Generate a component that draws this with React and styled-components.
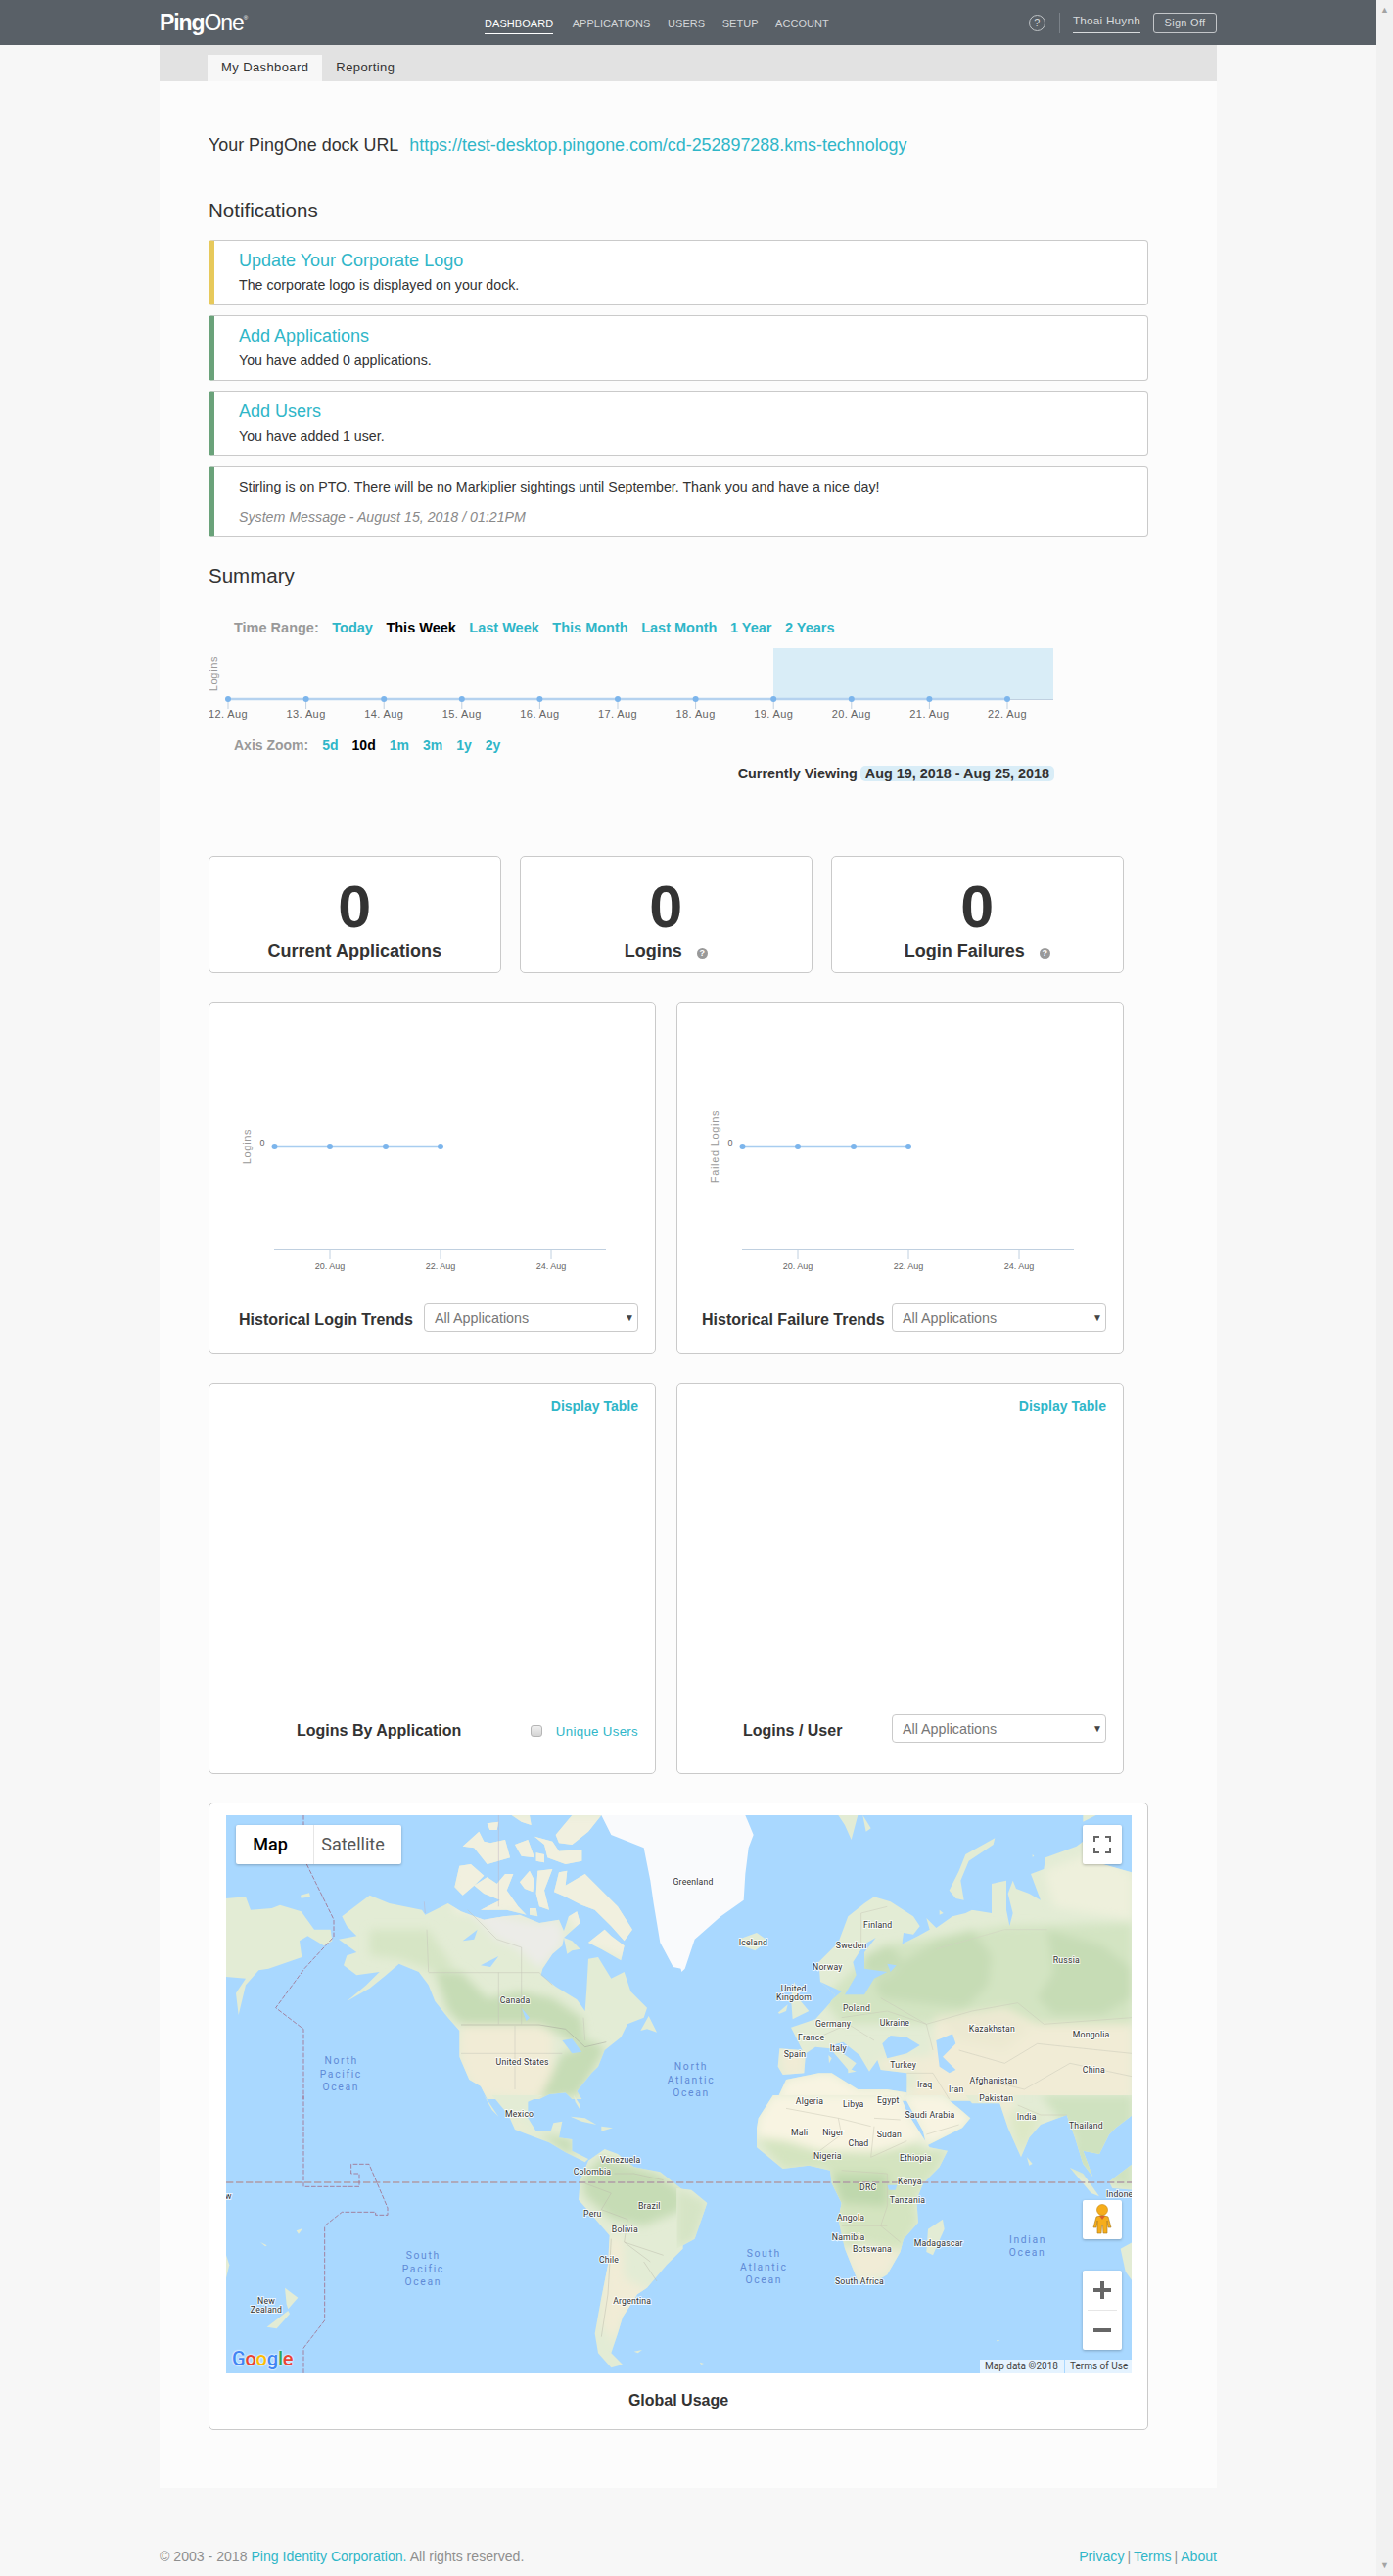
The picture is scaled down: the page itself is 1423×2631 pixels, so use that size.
import React from 'react';
import styled, { createGlobalStyle } from 'styled-components';

const TEAL = '#2fb6c8';
const BORDER = '#cacaca';

const GlobalStyle = createGlobalStyle`
  html, body { margin: 0; padding: 0; background: #f7f7f7; }
  body { font-family: "Liberation Sans", Arial, sans-serif; color: #333; }
  * { box-sizing: border-box; }
`;

const Page = styled.div`
  display: flex;
  width: 1423px;
  height: 2631px;
  overflow: hidden;
`;
const Main = styled.div`
  width: 1406px;
  display: flex;
  flex-direction: column;
`;
const ScrollTrack = styled.div`
  width: 17px;
  background: #f1f1f1;
  display: flex;
  flex-direction: column;
  justify-content: space-between;
  align-items: center;
  padding: 6px 0;
  color: #a3a3a3;
  font-size: 9px;
  line-height: 9px;
`;
const Header = styled.header`
  height: 46px;
  background: #596067;
  display: flex;
  justify-content: center;
`;
const HeaderInner = styled.div`
  width: 1080px;
  display: flex;
  align-items: center;
`;
const Logo = styled.div`
  width: 76px;
  color: #fff;
  font-size: 23px;
  letter-spacing: -1.1px;
  line-height: 26px;
  margin-top: -1px;
  white-space: nowrap;
  b { font-weight: 700; }
  span { font-weight: 400; }
  sup { font-size: 6px; vertical-align: 11px; line-height: 0; letter-spacing: 0; }
`;
const Nav = styled.nav`
  display: flex;
  gap: 17.5px;
  margin-left: 256px;
`;
const NavItem = styled.a`
  font-size: 11px;
  letter-spacing: 0.05px;
  color: ${(p) => (p.$active ? '#fff' : '#d3d6d9')};
  height: 22px;
  line-height: 23px;
  margin-top: 1px;
  margin-right: ${(p) => (p.$active ? 2 : 0)}px;
  border-bottom: 1px solid ${(p) => (p.$active ? '#fff' : 'transparent')};
  white-space: nowrap;
`;
const UserArea = styled.div`
  margin-left: auto;
  display: flex;
  align-items: center;
`;
const HelpRing = styled.span`
  width: 17px;
  height: 17px;
  border: 1px solid #bfc3c6;
  border-radius: 50%;
  color: #d3d6d9;
  font-size: 11px;
  line-height: 15px;
  text-align: center;
`;
const Divider = styled.span`
  width: 1px;
  height: 21px;
  background: #7b8289;
  margin: 0 13px 0 14px;
`;
const UserName = styled.a`
  font-size: 11.8px;
  letter-spacing: 0.2px;
  color: #d8dbdd;
  height: 21px;
  line-height: 17px;
  padding: 0;
  border-bottom: 1px solid #d8dbdd;
  margin-right: 13px;
  white-space: nowrap;
`;
const SignOff = styled.button`
  width: 65px;
  height: 21px;
  border: 1px solid #c3c6c9;
  border-radius: 3px;
  background: transparent;
  color: #d8dbdd;
  font: 11px "Liberation Sans", Arial, sans-serif;
  letter-spacing: 0.3px;
  padding: 0;
`;
const Column = styled.div`
  width: 1080px;
  margin: 0 auto;
`;
const TabBar = styled.div`
  height: 37px;
  background: #e2e2e2;
  padding: 10px 0 0 49px;
  display: flex;
`;
const Tab = styled.a`
  height: 27px;
  padding: 0 14px;
  line-height: 26px;
  font-size: 13px;
  letter-spacing: 0.4px;
  color: #333;
  background: ${(p) => (p.$active ? '#f7f7f7' : 'transparent')};
`;
const Body = styled.main`
  background: #fcfcfc;
  height: 2458px;
  padding: 55px 0 0 50px;
`;
const UrlRow = styled.div`
  font-size: 17.9px;
  line-height: 20px;
  display: flex;
  gap: 11px;
`;
const TealLink = styled.a`
  color: ${TEAL};
`;
const SectionTitle = styled.h2`
  margin: ${(p) => p.$top}px 0 0;
  font-size: 20.5px;
  font-weight: 400;
  line-height: 24px;
`;
const NoticeList = styled.div`
  width: 960px;
  margin-top: 18px;
  display: flex;
  flex-direction: column;
  gap: 10px;
`;
const Notice = styled.div`
  height: ${(p) => p.$height}px;
  background: #fff;
  border: 1px solid ${BORDER};
  border-left: 6px solid ${(p) => p.$accent};
  border-radius: 4px;
  padding: 10px 0 0 25px;
`;
const NoticeTitle = styled.a`
  display: block;
  color: ${TEAL};
  font-size: 18px;
  line-height: 20px;
`;
const NoticeText = styled.p`
  margin: ${(p) => p.$top}px 0 0;
  font-size: 14.2px;
  line-height: 16px;
  color: ${(p) => (p.$muted ? '#8a8a8a' : '#333')};
  font-style: ${(p) => (p.$muted ? 'italic' : 'normal')};
`;
const RangeRow = styled.div`
  display: flex;
  margin: ${(p) => p.$top}px 0 0 26px;
  font-size: ${(p) => p.$size}px;
  line-height: 16px;
  font-weight: 700;
  color: #999;
  gap: ${(p) => p.$gap}px;
`;
const RangeLink = styled.a`
  color: ${(p) => (p.$active ? '#000' : TEAL)};
`;
const NavChartSvg = styled.svg`
  display: block;
  margin-top: 2px;
  overflow: visible;
`;
const ViewingRow = styled.div`
  width: 864px;
  margin-top: 13px;
  display: flex;
  justify-content: flex-end;
  align-items: center;
  gap: 3px;
  font-size: 14.4px;
  font-weight: 700;
  line-height: 16px;
  white-space: nowrap;
`;
const ViewingPill = styled.span`
  background: #d9edf7;
  border-radius: 5px;
  padding: 0 5px;
  height: 16px;
`;
const StatRow = styled.div`
  display: grid;
  width: 935px;
  grid-template-columns: repeat(3, 298.5px);
  gap: 19.5px;
  margin-top: 76px;
`;
const Card = styled.section`
  background: #fff;
  border: 1px solid ${BORDER};
  border-radius: 5px;
`;
const StatCard = styled(Card)`
  height: 120px;
  text-align: center;
  padding-top: 20px;
`;
const StatNumber = styled.div`
  font-size: 61px;
  line-height: 62px;
  font-weight: 700;
  color: #333;
`;
const StatLabel = styled.div`
  font-size: 18px;
  line-height: 20px;
  font-weight: 700;
  margin-top: 4px;
`;
const TinyHelp = styled.span`
  display: inline-block;
  width: 11px;
  height: 11px;
  border-radius: 50%;
  background: #999;
  color: #fff;
  font-size: 9px;
  line-height: 11px;
  margin-left: 15px;
  vertical-align: 1px;
`;
const ChartGrid = styled.div`
  display: grid;
  width: 935px;
  grid-template-columns: repeat(2, 457px);
  gap: 21px;
  margin-top: ${(p) => p.$top}px;
`;
const TrendCard = styled(Card)`
  height: ${(p) => p.$height}px;
  display: flex;
  flex-direction: column;
`;
const TableLinkRow = styled.div`
  display: flex;
  justify-content: flex-end;
  padding: 14px 17px 0;
  font-size: 14px;
  line-height: 16px;
  font-weight: 700;
`;
const CardFooter = styled.div`
  margin-top: auto;
  height: 29px;
  margin-bottom: ${(p) => p.$bottom}px;
  padding: 0 17px 0 ${(p) => p.$left}px;
  display: flex;
  align-items: center;
  justify-content: space-between;
`;
const FooterTitle = styled.span`
  font-size: 16px;
  font-weight: 700;
  white-space: nowrap;
  margin-top: 5px;
`;
const SelectBox = styled.div`
  width: 219px;
  height: 29px;
  background: #fff;
  border: 1px solid ${BORDER};
  border-radius: 4px;
  padding: 0 3px 0 10px;
  display: flex;
  align-items: center;
  justify-content: space-between;
  font-size: 14.3px;
  color: #777;
  i { font-style: normal; font-size: 10px; color: #444; }
`;
const UniqueUsers = styled.label`
  display: flex;
  align-items: center;
  gap: 14px;
  font-size: 13.3px;
  letter-spacing: 0.3px;
  color: ${TEAL};
  margin-top: 5px;
`;
const FakeCheck = styled.span`
  width: 12px;
  height: 12px;
  border: 1px solid #b5b5b5;
  border-radius: 3px;
  background: linear-gradient(#f0f0f0, #d4d4d4);
`;
const MapCard = styled(Card)`
  width: 960px;
  height: 641px;
  margin-top: 29px;
  padding: 12px 17px 0;
`;
const MapFrame = styled.div`
  position: relative;
  width: 925px;
  height: 570px;
  background: #a9d8ff;
  overflow: hidden;
  svg { display: block; }
`;
const MapCaption = styled.div`
  text-align: center;
  font-size: 16px;
  font-weight: 700;
  line-height: 20px;
  margin-top: 18px;
`;
const MapButton = styled.div`
  position: absolute;
  background: #fff;
  border-radius: 2px;
  box-shadow: 0 1px 3px rgba(0, 0, 0, 0.25);
  display: flex;
  flex-direction: column;
  align-items: center;
  justify-content: center;
  width: 40px;
  height: ${(p) => p.$height}px;
  right: 10px;
  top: ${(p) => p.$top}px;
`;
const TypeControl = styled.div`
  position: absolute;
  left: 10px;
  top: 10px;
  height: 40px;
  width: 169px;
  background: #fff;
  border-radius: 2px;
  box-shadow: 0 1px 3px rgba(0, 0, 0, 0.25);
  display: flex;
  font-family: Roboto, sans-serif;
  font-size: 18px;
  line-height: 40px;
`;
const TypeOption = styled.div`
  width: ${(p) => p.$width}px;
  padding-right: ${(p) => (p.$active ? 9 : 10)}px;
  text-align: center;
  color: ${(p) => (p.$active ? '#000' : '#565656')};
  font-weight: ${(p) => (p.$active ? 500 : 400)};
  border-right: ${(p) => (p.$active ? '1px solid #e6e6e6' : 'none')};
`;
const ZoomRule = styled.div`
  width: 30px;
  height: 1px;
  background: #e6e6e6;
`;
const Attribution = styled.div`
  position: absolute;
  right: 0;
  bottom: 0;
  height: 14px;
  display: flex;
  gap: 1px;
  font-family: Roboto, sans-serif;
  font-size: 10px;
  line-height: 14px;
  color: #444;
`;
const AttrPiece = styled.span`
  background: rgba(255, 255, 255, 0.7);
  padding: 0 5px;
  width: ${(p) => p.$width}px;
  white-space: nowrap;
`;
const GoogleMark = styled.div`
  position: absolute;
  left: 6px;
  bottom: 3px;
  font-family: Roboto, sans-serif;
  font-size: 20px;
  line-height: 24px;
  letter-spacing: -0.2px;
  font-weight: 500;
  text-shadow: 0 0 2px #fff, 0 0 2px #fff;
`;
const Letter = styled.span`
  color: ${(p) => p.$color};
`;
const FooterBar = styled.footer`
  width: 1080px;
  margin: 62px auto 0;
  display: flex;
  justify-content: space-between;
  font-size: 14.1px;
  line-height: 16px;
  color: #8f8f8f;
`;
const FooterLinks = styled.div`
  display: flex;
  gap: 3px;
`;

const NAV_ITEMS = ['DASHBOARD', 'APPLICATIONS', 'USERS', 'SETUP', 'ACCOUNT'];
const NOTICES = [
  { title: 'Update Your Corporate Logo', text: 'The corporate logo is displayed on your dock.', accent: '#e7c95b' },
  { title: 'Add Applications', text: 'You have added 0 applications.', accent: '#6aa27a' },
  { title: 'Add Users', text: 'You have added 1 user.', accent: '#6aa27a' },
];
const RANGES = ['Today', 'This Week', 'Last Week', 'This Month', 'Last Month', '1 Year', '2 Years'];
const ZOOMS = ['5d', '10d', '1m', '3m', '1y', '2y'];
const NAV_DAYS = [12, 13, 14, 15, 16, 17, 18, 19, 20, 21, 22];

function NavChart() {
  const xAt = (i) => 20 + 79.6 * i;
  return (
    <NavChartSvg width="870" height="92" viewBox="0 0 870 92">
      <rect x="577" y="11" width="286" height="52" fill="#d9edf7" />
      <line x1="20" x2="863" y1="63.5" y2="63.5" stroke="#c0d0e0" />
      <line x1="20" x2="816" y1="63" y2="63" stroke="#b5d2ef" strokeWidth="2.5" />
      {NAV_DAYS.map((d, i) => (
        <g key={d}>
          <line x1={xAt(i)} x2={xAt(i)} y1="63" y2="73" stroke="#c0d0e0" />
          <circle cx={xAt(i)} cy="63" r="3" fill="#7cb5ec" />
          <text x={xAt(i)} y="82" textAnchor="middle" fontSize="11" letterSpacing="0.4" fill="#666" fontFamily="Liberation Sans">{d}. Aug</text>
        </g>
      ))}
      <text transform="translate(9 37) rotate(-90)" textAnchor="middle" fontSize="11" letterSpacing="0.7" fill="#999" fontFamily="Liberation Sans">Logins</text>
    </NavChartSvg>
  );
}

function TrendChart({ label }) {
  const pts = [66.5, 123, 180, 236];
  const ticks = [[123, '20. Aug'], [236, '22. Aug'], [349, '24. Aug']];
  return (
    <svg width="456" height="307" viewBox="0 0 456 307" style={{ display: 'block' }}>
      <line x1="66" x2="405" y1="147.5" y2="147.5" stroke="#d8d8d8" />
      <line x1={pts[0]} x2={pts[3]} y1="147" y2="147" stroke="#a8cdf0" strokeWidth="2.5" />
      {pts.map((x) => <circle key={x} cx={x} cy="147" r="3" fill="#7cb5ec" />)}
      <line x1="66" x2="405" y1="252.5" y2="252.5" stroke="#c0d0e0" />
      {ticks.map(([x, t]) => (
        <g key={t}>
          <line x1={x} x2={x} y1="252" y2="262" stroke="#c0d0e0" />
          <text x={x} y="272" textAnchor="middle" fontSize="9" fill="#666" fontFamily="Liberation Sans">{t}</text>
        </g>
      ))}
      <text x="54" y="146" textAnchor="middle" fontSize="9" fill="#666" fontFamily="Liberation Sans">0</text>
      <text transform="translate(42 147) rotate(-90)" textAnchor="middle" fontSize="11" letterSpacing="0.7" fill="#999" fontFamily="Liberation Sans">{label}</text>
    </svg>
  );
}

const LAND_GREEN = '#e3ecd5';
const FOREST = '#c6dcb5';
const TAN = '#f1ecd6';
const CREAM = '#f8f4e2';
const TUNDRA = '#ecece8';
const WATER = '#a9d8ff';

// every list below is in 3x map px, relative to its quadrant
const QUADRANTS = [
  {
    dx: 0, dy: 0,
    land: [
      '0,255 60,250 75,290 140,285 165,275 230,295 270,350 320,350 325,385 300,400 250,370 225,385 232,435 130,470 100,475 60,520 38,612 30,545 60,500 0,495',
      '355,310 440,245 500,270 600,290 610,305 680,270 720,295 790,320 850,310 900,305 960,330 1020,320 1035,355 1050,310 1075,295 1085,330 1035,375 1030,400 1000,425 970,470 965,490 1010,525 1075,565 1100,600 1105,530 1110,440 1140,435 1180,500 1220,480 1240,540 1290,590 1280,620 1230,640 1210,680 1160,720 1140,770 1120,790 1075,845 1090,870 1060,870 1040,850 990,855 960,870 800,870 780,830 745,810 715,740 715,660 680,620 640,570 620,520 590,480 530,455 490,490 440,530 370,570 430,520 470,480 400,490 360,460 370,430 400,420 345,380 400,370 370,340',
      '700,220 715,155 750,150 790,185 760,215 725,245',
      '760,215 800,190 830,210 855,180 880,180 860,230 895,280 920,305 860,290 780,290 840,260 790,240',
      '900,205 930,170 945,200 940,235 915,225',
      '955,170 1000,165 975,230 990,290 960,280 950,240',
      '1005,235 1020,175 1045,170 1040,215 1100,180 1150,230 1200,280 1245,350 1220,385 1180,340 1130,290 1090,275 1040,250',
      '1160,350 1110,390 1150,410 1210,445 1220,400 1180,370',
      '725,95 775,50 790,80 810,85 855,75 870,130 800,150 760,100',
      '885,90 925,75 945,130 905,125',
      '945,65 1000,80 1020,110 1090,105 1090,140 1040,150 985,130 975,90',
      '950,115 975,120 975,145 950,140',
      '875,0 930,0 935,30 905,20',
      '1010,60 1060,0 1150,0 1110,50 1060,90 1020,85',
      '800,25 835,20 830,45 808,45',
      '1035,375 1060,385 1085,410 1060,415 1045,425',
      '1270,660 1295,615 1320,665 1290,655',
      '228,245 255,238 258,250 230,254',
      '930,285 950,285 955,310 930,305',
    ],
    ice: ['1395,0 1150,0 1180,60 1280,100 1300,200 1310,270 1320,330 1330,390 1370,465 1395,470'],
    patches: [
      ['#f1f0df', '680,0 1260,0 1260,450 1100,400 1040,300 700,300'],
      [TUNDRA, '740,290 830,380 880,400 905,420 960,470 1030,400 1035,370 1020,320 960,330 850,310'],
      [FOREST, '640,480 720,480 800,560 900,540 1000,560 1090,620 1100,690 1140,700 1090,720 1040,680 960,640 800,640 720,640 680,600'],
      [TAN, '720,645 960,645 1000,670 1000,790 960,870 780,860 730,790 715,720'],
      [FOREST, '1000,790 1030,730 1140,700 1160,720 1120,790 1075,860 960,870'],
      ['#d6e5c5', '440,350 620,350 700,470 640,480 530,440 440,430'],
    ],
    water: [
      '725,385 770,350 760,380',
      '780,460 835,432 810,465',
      '1030,690 1060,685 1090,725 1060,730',
      '905,590 930,620 920,630',
    ],
    borders: [
      ['#a5a59a', '720,642 960,642 1040,655 1100,710 1165,695'],
      ['#c5c5b8', '620,482 960,482 1000,520'],
      ['#c5c5b8', '905,405 905,640'],
      ['#c5c5b8', '835,482 835,640'],
      ['#c5c5b8', '615,350 620,480'],
      ['#c5c5b8', '740,290 830,380 905,405'],
      ['#c5c5b8', '720,730 1030,730'],
      ['#c5c5b8', '885,645 885,840'],
      ['#c5c5b8', '1095,620 1100,690'],
      ['#bdb3c4', '835,0 835,280'],
      ['#bdb3c4', '607,265 610,300'],
    ],
    dateLine: ['237,0 237,30', '247,150 330,320 330,372 240,470 152,590 237,655 237,870'],
    labels: [
      ['Canada', 885, 567], ['United States', 908, 756],
    ],
    oceans: [['North', 353, 750], ['Pacific', 352, 792], ['Ocean', 352, 832]],
  },
  {
    dx: 1386, dy: 0,
    land: [
      '430,450 490,390 520,310 570,270 600,250 650,265 720,310 740,340 720,365 690,360 685,395 735,370 770,350 760,315 790,345 840,310 880,300 900,290 960,300 960,210 1005,200 1005,290 1015,340 1025,300 1010,240 1025,200 1035,225 1075,240 1110,260 1080,180 1120,165 1125,130 1220,95 1240,80 1280,100 1300,150 1389,175 1392,875 700,875 700,790 620,780 610,750 585,785 555,735 505,695 470,705 545,760 525,785 465,715 420,710 390,730 385,790 320,795 305,770 310,715 380,720 345,650 420,625 465,575 480,550 435,510',
      '350,625 400,600 375,570 355,510 345,560',
      '305,605 335,580 330,600 310,608',
      '185,380 240,360 275,385 235,415 195,400',
      '830,230 860,170 880,120 970,70 965,90 890,140 865,200 875,260 850,255',
      '490,0 550,0 530,75 510,30',
      '565,0 590,40 575,50',
      '1240,0 1280,0 1240,20',
      '300,875 330,810 430,790 470,790 550,840 640,840 700,850 700,875',
      '1085,120 1090,125 1085,128',
      '800,290 812,300 800,305',
      '460,735 470,745 462,760',
      '520,775 545,785 520,790',
    ],
    ice: ['0,0 205,0 230,60 215,100 205,180 200,260 130,310 50,380 20,470 10,480 0,440'],
    patches: [
      ['#d3e4c2', '440,560 620,400 1000,340 1392,330 1392,640 1100,640 900,600 760,640 500,640'],
      [FOREST, '700,440 800,380 900,350 960,430 950,520 880,590 780,580 620,560 600,510 650,490'],
      [FOREST, '1130,350 1300,400 1389,470 1389,560 1300,610 1150,610 1100,560 1150,480'],
      [FOREST, '570,430 650,400 690,450 620,490 570,480'],
      [TAN, '790,620 1000,590 1100,640 1389,640 1389,875 700,875 780,720'],
      [CREAM, '300,875 330,810 430,790 470,790 550,840 640,840 700,850 700,875'],
      ['#ece9d2', '800,620 1000,600 1080,650 1000,720 850,690'],
      ['#eef0dc', '1120,170 1280,110 1389,180 1389,320 1150,280'],
      [TAN, '610,750 770,740 760,790 620,780'],
      [TAN, '310,715 385,725 385,790 320,795'],
    ],
    water: [
      '510,550 545,490 535,450 570,395 605,375 570,420 570,470 640,480 600,500 570,550',
      '625,700 650,675 700,680 740,705 700,730 640,745',
      '790,690 840,670 850,700 810,740 850,780 830,790 800,770',
      '435,510 500,540 465,570 480,550',
      '640,455 668,460 650,480',
      '890,250 950,290 900,290',
    ],
    borders: [
      ['#c8c8b8', '620,560 760,640 900,600 1040,575 1120,640 1389,620'],
      ['#c8c8b8', '500,620 640,600 760,640 780,720'],
      ['#c8c8b8', '430,680 520,640 600,690'],
      ['#c8c8b8', '860,720 1000,760 1100,700 1389,730'],
      ['#c8c8b8', '900,800 1060,840 1200,760 1389,800'],
      ['#c8c8b8', '560,390 560,300 640,280'],
      ['#c8c8b8', '700,790 780,790 830,870'],
      ['#d0d0c0', '790,410 1000,350 1130,350'],
    ],
    dateLine: [],
    labels: [
      ['Greenland', 45, 204], ['Iceland', 229, 390], ['Finland', 611, 335], ['Sweden', 530, 399], ['Norway', 457, 465],
      ['United', 353, 530], ['Kingdom', 354, 558], ['Poland', 546, 590], ['Germany', 474, 639], ['Ukraine', 663, 636],
      ['France', 407, 681], ['Italy', 490, 714], ['Spain', 357, 732], ['Turkey', 689, 765], ['Kazakhstan', 961, 654],
      ['Mongolia', 1265, 672], ['China', 1273, 780], ['Russia', 1189, 444], ['Afghanistan', 966, 813], ['Iraq', 755, 825], ['Iran', 851, 841],
    ],
    oceans: [['North', 39, 768], ['Atlantic', 39, 810], ['Ocean', 39, 850]],
  },
  {
    dx: 0, dy: 858,
    land: [
      '815,0 970,0 925,20 925,70 950,110 995,110 1003,85 1030,80 1020,130 1060,135 1060,170 1110,195 1100,205 1040,175 990,145 945,128 885,105 865,60',
      '790,0 835,65 815,45',
      '1055,65 1100,70 1135,90 1090,80',
      '1150,95 1185,100 1150,110',
      '1065,0 1085,30 1085,45 1070,20',
      '1110,200 1160,165 1200,180 1250,220 1330,235 1400,290 1400,470 1350,520 1290,590 1260,610 1215,680 1200,730 1180,790 1215,825 1180,835 1140,790 1130,730 1150,620 1170,520 1175,430 1080,320 1085,260',
      '180,590 220,620 190,655 185,640',
      '190,660 125,710 155,715 195,670',
      '0,490 10,520 0,560',
      '105,450 125,460 120,463',
      '215,415 235,408 222,425',
      '1250,785 1275,780 1262,790',
    ],
    ice: [],
    patches: [
      [FOREST, '1090,260 1150,190 1320,240 1400,300 1400,350 1280,400 1180,380 1100,310'],
      [TAN, '1175,430 1215,440 1220,560 1300,600 1215,680 1190,760 1150,700 1160,560'],
      ['#f0ebd0', '870,60 940,120 890,100'],
      [FOREST, '960,120 1060,135 1060,170 1110,195 1040,175'],
    ],
    water: [],
    borders: [
      ['#bcbcac', '1100,270 1180,300 1150,350 1230,380 1220,450 1300,510'],
      ['#bcbcac', '1220,450 1340,490'],
      ['#bcbcac', '1180,440 1170,610 1150,740'],
      ['#bcbcac', '1190,240 1250,240 1340,260'],
      ['#bcbcac', '1280,510 1320,570'],
    ],
    dateLine: ['237,0 237,280 408,280 408,240 383,240 383,211 438,211 495,345 495,367 458,367 458,358 355,358 302,400 302,690 242,768 237,775 237,852'],
    labels: [
      ['Mexico', 899, 57], ['Venezuela', 1208, 198], ['Colombia', 1122, 234], ['Peru', 1123, 363], ['Brazil', 1297, 339],
      ['Bolivia', 1222, 411], ['Chile', 1173, 503], ['Argentina', 1244, 630], ['New', 123, 630], ['Zealand', 123, 657], ['New', -10, 310],
    ],
    oceans: [['South', 604, 489], ['Pacific', 604, 531], ['Ocean', 604, 571]],
  },
  {
    dx: 1386, dy: 858,
    land: [
      '245,70 290,0 680,0 700,50 750,130 770,160 825,170 800,220 750,270 730,320 735,390 690,440 680,480 640,550 590,580 550,570 510,470 490,380 500,330 470,270 465,230 400,215 320,225 240,160 240,100',
      '690,0 750,110 760,155 870,100 895,70 860,40 810,0',
      '880,0 900,25 985,25 1010,100 1050,190 1075,130 1110,90 1190,60 1215,130 1240,210 1270,250 1240,170 1290,180 1320,120 1340,100 1392,60 1392,0',
      '1200,222 1240,240 1290,310 1265,300',
      '1320,265 1392,210 1392,290 1330,285',
      '1068,190 1085,210 1075,215',
      '765,410 810,380 815,410 780,490 760,480',
      '1355,470 1392,450 1392,570 1370,540',
      '-5,285 40,290 88,330 50,440 -5,470',
      '975,750 985,750 978,755',
      '65,818 78,822 70,825',
    ],
    ice: [],
    patches: [
      [CREAM, '245,70 290,0 680,0 700,50 750,130 700,150 600,175 430,170 330,140 240,130'],
      ['#d4e4c0', '240,130 330,140 430,170 600,175 720,150 770,170 825,170 790,230 740,290 725,330 735,390 680,480 560,450 510,470 490,380 470,270 460,225 320,225'],
      ['#bfd8ad', '470,240 640,240 640,340 500,330'],
      [TAN, '510,470 680,470 640,550 550,570'],
      [CREAM, '690,0 750,110 760,155 870,100 895,70 860,40 810,0'],
      [TAN, '880,0 1030,0 1010,100 985,25'],
      ['#dde8c6', '1010,50 1110,60 1080,130 1050,190'],
      ['#cfe2c0', '1110,0 1392,0 1392,290 1200,222 1215,130'],
      ['#d5e4c5', '-5,285 88,330 50,440 -5,470'],
    ],
    water: ['640,275 670,275 665,290 645,290'],
    borders: [
      ['#c8c7b4', '330,40 490,70 590,95'],
      ['#c8c7b4', '490,70 500,120 420,180'],
      ['#c8c7b4', '600,70 680,75'],
      ['#c8c7b4', '600,95 590,190 700,140'],
      ['#c8c7b4', '500,230 640,240 640,340 620,400 680,450'],
      ['#c8c7b4', '500,400 640,400'],
      ['#c8c7b4', '760,120 860,90'],
      ['#c8c7b4', '1040,30 1110,60 1190,60'],
    ],
    dateLine: [],
    labels: [
      ['Pakistan', 974, 10], ['Algeria', 402, 18], ['Libya', 536, 27], ['Egypt', 643, 16], ['Saudi Arabia', 771, 59], ['India', 1067, 66],
      ['Thailand', 1249, 93], ['Mali', 371, 113], ['Niger', 474, 114], ['Sudan', 646, 120], ['Chad', 552, 146], ['Nigeria', 457, 186],
      ['Ethiopia', 727, 192], ['Kenya', 709, 264], ['DRC', 581, 282], ['Tanzania', 702, 321], ['Angola', 528, 375], ['Namibia', 521, 435],
      ['Botswana', 594, 471], ['Madagascar', 797, 453], ['South Africa', 555, 570], ['Indone', 1352, 303],
    ],
    oceans: [['South', 262, 483], ['Atlantic', 262, 525], ['Ocean', 262, 565], ['Indian', 1071, 441], ['Ocean', 1070, 481]],
  },
];

function WorldMap() {
  return (
    <svg width="925" height="570" viewBox="0 0 2775 1710">
      <defs>
        <filter id="soft" x="-10%" y="-10%" width="120%" height="120%">
          <feGaussianBlur stdDeviation="14" />
        </filter>
        {QUADRANTS.map((q, i) => (
          <clipPath id={`land-${i}`} key={i}>
            {q.land.map((pts, j) => <polygon key={j} points={pts} />)}
          </clipPath>
        ))}
      </defs>
      {QUADRANTS.map((q, i) => (
        <g key={i} transform={`translate(${q.dx} ${q.dy})`}>
          {q.land.map((pts, j) => <polygon key={j} points={pts} fill={LAND_GREEN} />)}
          <g clipPath={`url(#land-${i})`}>
            <g filter="url(#soft)">
              {q.patches.map(([fill, pts], j) => <polygon key={j} points={pts} fill={fill} />)}
            </g>
          </g>
          {q.ice.map((pts, j) => <polygon key={j} points={pts} fill="#f9fafc" />)}
          {q.water.map((pts, j) => <polygon key={j} points={pts} fill={WATER} />)}
          {q.borders.map(([stroke, pts], j) => (
            <polyline key={j} points={pts} fill="none" stroke={stroke} strokeWidth="1.5" />
          ))}
        </g>
      ))}
      <line x1="0" x2="2775" y1="1125" y2="1125" stroke="#b09aa6" strokeWidth="4" strokeDasharray="22 8" />
      {QUADRANTS.map((q, i) => (
        <g key={i} transform={`translate(${q.dx} ${q.dy})`}>
          {q.dateLine.map((pts, j) => (
            <polyline key={j} points={pts} fill="none" stroke="#a0708c" strokeWidth="2.5" strokeDasharray="14 5" />
          ))}
          {q.labels.map(([t, x, y]) => (
            <text key={t + x} x={x} y={y} textAnchor="middle" dominantBaseline="central" fontFamily="Roboto" fontSize="26"
              fill="#333" stroke="#fff" strokeOpacity="0.75" strokeWidth="6" paintOrder="stroke" letterSpacing="0.6">{t}</text>
          ))}
          {q.oceans.map(([t, x, y]) => (
            <text key={t + x} x={x} y={y} textAnchor="middle" dominantBaseline="central" fontFamily="Roboto" fontSize="31"
              fill="#5f8ad6" letterSpacing="5">{t}</text>
          ))}
        </g>
      ))}
    </svg>
  );
}

function Pegman() {
  return (
    <svg width="20" height="32" viewBox="0 0 20 32">
      <circle cx="10" cy="6" r="5.5" fill="#f6ad1a" stroke="#c98a12" strokeWidth="0.6" />
      <path d="M4 13 Q10 10 16 13 L19 24 L16 24 L15 17 L15 30 L11 30 L10.5 22 L9.5 22 L9 30 L5 30 L5 17 L4 24 L1 24 Z" fill="#f6ad1a" stroke="#a87a1e" strokeWidth="0.6" />
      <path d="M7 12 L10 16 L13 12 Z" fill="#d9602a" />
    </svg>
  );
}

function GoogleLogo() {
  const letters = [['G', '#4285f4'], ['o', '#ea4335'], ['o', '#fbbc05'], ['g', '#4285f4'], ['l', '#34a853'], ['e', '#ea4335']];
  return (
    <GoogleMark>
      {letters.map(([c, color], i) => <Letter key={i} $color={color}>{c}</Letter>)}
    </GoogleMark>
  );
}

export default function App() {
  return (
    <Page>
      <GlobalStyle />
      <Main>
        <Header>
          <HeaderInner>
            <Logo><b>Ping</b><span>One</span><sup>®</sup></Logo>
            <Nav>
              {NAV_ITEMS.map((n, i) => <NavItem key={n} $active={i === 0}>{n}</NavItem>)}
            </Nav>
            <UserArea>
              <HelpRing>?</HelpRing>
              <Divider />
              <UserName>Thoai Huynh</UserName>
              <SignOff>Sign Off</SignOff>
            </UserArea>
          </HeaderInner>
        </Header>
        <Column>
          <TabBar>
            <Tab $active>My Dashboard</Tab>
            <Tab>Reporting</Tab>
          </TabBar>
          <Body>
            <UrlRow>
              <span>Your PingOne dock URL</span>
              <TealLink>https://test-desktop.pingone.com/cd-252897288.kms-technology</TealLink>
            </UrlRow>
            <SectionTitle $top={45}>Notifications</SectionTitle>
            <NoticeList>
              {NOTICES.map((n) => (
                <Notice key={n.title} $height={67} $accent={n.accent}>
                  <NoticeTitle>{n.title}</NoticeTitle>
                  <NoticeText $top={7}>{n.text}</NoticeText>
                </Notice>
              ))}
              <Notice $height={72} $accent="#6aa27a">
                <NoticeText $top={2}>Stirling is on PTO. There will be no Markiplier sightings until September. Thank you and have a nice day!</NoticeText>
                <NoticeText $top={15} $muted>System Message - August 15, 2018 / 01:21PM</NoticeText>
              </Notice>
            </NoticeList>
            <SectionTitle $top={28}>Summary</SectionTitle>
            <RangeRow $top={33} $size={14.5} $gap={13.5}>
              <span>Time Range:</span>
              {RANGES.map((r) => <RangeLink key={r} $active={r === 'This Week'}>{r}</RangeLink>)}
            </RangeRow>
            <NavChart />
            <RangeRow $top={10} $size={14} $gap={14}>
              <span>Axis Zoom:</span>
              {ZOOMS.map((z) => <RangeLink key={z} $active={z === '10d'}>{z}</RangeLink>)}
            </RangeRow>
            <ViewingRow>
              <span>Currently Viewing</span>
              <ViewingPill>Aug 19, 2018 - Aug 25, 2018</ViewingPill>
            </ViewingRow>
            <StatRow>
              <StatCard>
                <StatNumber>0</StatNumber>
                <StatLabel>Current Applications</StatLabel>
              </StatCard>
              <StatCard>
                <StatNumber>0</StatNumber>
                <StatLabel>Logins<TinyHelp>?</TinyHelp></StatLabel>
              </StatCard>
              <StatCard>
                <StatNumber>0</StatNumber>
                <StatLabel>Login Failures<TinyHelp>?</TinyHelp></StatLabel>
              </StatCard>
            </StatRow>
            <ChartGrid $top={29}>
              <TrendCard $height={360}>
                <TrendChart label="Logins" />
                <CardFooter $bottom={22} $left={30}>
                  <FooterTitle>Historical Login Trends</FooterTitle>
                  <SelectBox>All Applications<i>▼</i></SelectBox>
                </CardFooter>
              </TrendCard>
              <TrendCard $height={360}>
                <TrendChart label="Failed Logins" />
                <CardFooter $bottom={22} $left={25}>
                  <FooterTitle>Historical Failure Trends</FooterTitle>
                  <SelectBox>All Applications<i>▼</i></SelectBox>
                </CardFooter>
              </TrendCard>
            </ChartGrid>
            <ChartGrid $top={30}>
              <TrendCard $height={399}>
                <TableLinkRow><TealLink>Display Table</TealLink></TableLinkRow>
                <CardFooter $bottom={31} $left={89}>
                  <FooterTitle>Logins By Application</FooterTitle>
                  <UniqueUsers><FakeCheck />Unique Users</UniqueUsers>
                </CardFooter>
              </TrendCard>
              <TrendCard $height={399}>
                <TableLinkRow><TealLink>Display Table</TealLink></TableLinkRow>
                <CardFooter $bottom={31} $left={67}>
                  <FooterTitle>Logins / User</FooterTitle>
                  <SelectBox>All Applications<i>▼</i></SelectBox>
                </CardFooter>
              </TrendCard>
            </ChartGrid>
            <MapCard>
              <MapFrame>
                <WorldMap />
                <TypeControl>
                  <TypeOption $active $width={80}>Map</TypeOption>
                  <TypeOption $width={89}>Satellite</TypeOption>
                </TypeControl>
                <MapButton $top={10} $height={40}>
                  <svg width="18" height="18" viewBox="0 0 18 18" fill="none" stroke="#666" strokeWidth="2">
                    <path d="M1 6V1h5M12 1h5v5M17 12v5h-5M6 17H1v-5" />
                  </svg>
                </MapButton>
                <MapButton $top={393} $height={40}><Pegman /></MapButton>
                <MapButton $top={465} $height={81}>
                  <svg width="18" height="40" viewBox="0 0 18 40" fill="#666"><path d="M7 11h4v7h7v4h-7v7H7v-7H0v-4h7z" /></svg>
                  <ZoomRule />
                  <svg width="18" height="40" viewBox="0 0 18 40" fill="#666"><rect y="18" width="18" height="4" /></svg>
                </MapButton>
                <GoogleLogo />
                <Attribution>
                  <AttrPiece $width={86}>Map data ©2018</AttrPiece>
                  <AttrPiece $width={68}>Terms of Use</AttrPiece>
                </Attribution>
              </MapFrame>
              <MapCaption>Global Usage</MapCaption>
            </MapCard>
          </Body>
          <FooterBar>
            <span>© 2003 - 2018 <TealLink>Ping Identity Corporation.</TealLink> All rights reserved.</span>
            <FooterLinks>
              <TealLink>Privacy</TealLink>|<TealLink>Terms</TealLink>|<TealLink>About</TealLink>
            </FooterLinks>
          </FooterBar>
        </Column>
      </Main>
      <ScrollTrack><span>▲</span><span>▼</span></ScrollTrack>
    </Page>
  );
}
